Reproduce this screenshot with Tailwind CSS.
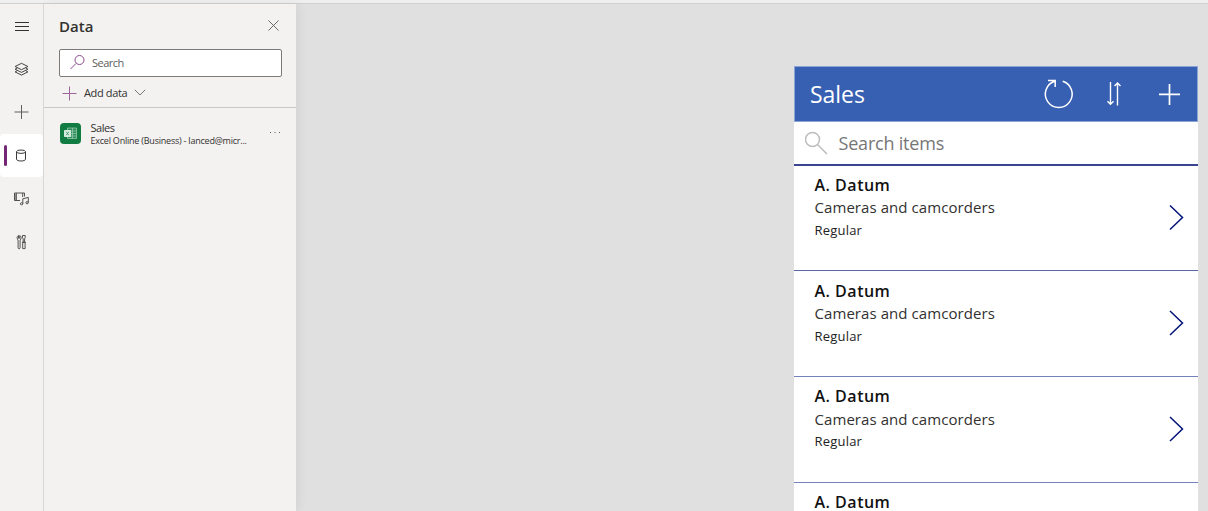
<!DOCTYPE html>
<html lang="en">
<head>
<meta charset="utf-8">
<title>Data</title>
<script src="https://cdn.jsdelivr.net/npm/@tailwindcss/browser@4"></script>
</head>
<body class="h-[511px] w-[1208px] overflow-hidden bg-[#e0e0e0] font-['Open_Sans','Noto_Sans',sans-serif] text-[#323130]">
<div class="flex h-[511px] flex-col overflow-hidden">
  <div class="h-1 shrink-0 border-b border-[#d0d0d0] bg-[#f0f0f0]"></div>
  <div class="flex min-h-0 flex-1">
    <nav class="z-20 flex w-11 shrink-0 flex-col border-r border-[#d8d7d6] bg-[#f3f2f1]">
      <button class="flex h-[43px] items-center pl-[13.500px]" aria-label="Menu">
        <svg class="h-4 w-4" viewBox="0 0 16 16" fill="none" stroke="#323130"><path d="M1 4.500h14M1 8.500h14M1 12.500h14"/></svg>
      </button>
      <button class="flex h-[43px] items-center pl-[13px]" aria-label="Tree view">
        <svg class="h-4 w-4" viewBox="0 0 16 16" fill="none" stroke="#3b3a39" stroke-width=".95"><path d="M8.500 2.300 14.900 5.500 8.500 8.700 2.100 5.500z"/><path d="M4.200 7 2.100 8.200l6.400 3.200 6.400-3.200L12.800 7M4.200 9.700l-2.100 1.200 6.400 3.200 6.400-3.200-2.100-1.200"/></svg>
      </button>
      <button class="flex h-[43px] items-center pl-[13px]" aria-label="Insert">
        <svg class="h-4 w-4" viewBox="0 0 16 16" fill="none" stroke="#605e5c"><path d="M1.500 8h14M8.500 1v14"/></svg>
      </button>
      <button class="mt-px flex h-[43px] items-center rounded-sm bg-white pl-1" aria-label="Data">
        <span class="h-[21px] w-[3px] rounded-sm bg-[#742774]"></span>
        <svg class="ml-1.5 h-4 w-4" viewBox="0 0 16 16" fill="none" stroke="#3b3a39"><path d="M3.500 3.700v7.600c0 1 2 1.700 4.500 1.700s4.500-.7 4.500-1.700V3.700"/><ellipse cx="8" cy="3.700" rx="4.500" ry="1.700"/></svg>
      </button>
      <button class="flex h-[43px] items-center pl-[13px]" aria-label="Media">
        <svg class="h-4 w-4" viewBox="0 0 16 16" fill="none" stroke="#4a4948" stroke-width=".95"><path d="M7 9.500H1.500V2h10v3.500M3.300 2v7.500M1.500 4h1.800M1.500 6h1.800M1.500 8h1.800M9.700 2v4"/><path d="M9.800 12.800V7.800l5.500-1.400v5.300"/><ellipse cx="8.600" cy="12.800" rx="1.200" ry="1.100"/><ellipse cx="14.100" cy="11.700" rx="1.200" ry="1.100"/></svg>
      </button>
      <button class="flex h-[43px] items-center pl-[13px]" aria-label="Advanced tools">
        <svg class="h-4 w-4" viewBox="0 0 16 16" fill="none" stroke="#4a4948" stroke-width=".95"><path d="M5.500 1.500v2.700h1.200V1.500c1 .5 1.400 1.400 1.400 2.400s-.4 1.600-1 2.100v7.700c0 .7-.4 1.100-1 1.100s-1-.4-1-1.100V6c-.6-.5-1-1.100-1-2.100s.4-1.900 1.400-2.400zM9.500 1.500h2.700v2.300l-.6 1v3.400h-1.400V4.800l-.7-1zM9 8.300h3.800M9.700 8.300v6.300h2.400V8.300"/></svg>
      </button>
    </nav>

    <aside class="z-10 w-[252px] shrink-0 bg-[#f3f2f1] shadow-[2px_0_10px_rgba(0,0,0,0.07)]">
      <div class="h-[104px] border-b border-[#c8c8c8] pr-3.5 pl-[15px]">
        <header class="flex h-[45px] items-center justify-between pb-0.5">
          <h1 class="text-[15px] leading-5 font-semibold">Data</h1>
          <svg class="mr-[3px] h-[11px] w-[11px]" viewBox="0 0 12 12" fill="none" stroke="#605e5c"><path d="m.5.5 11 11M11.500.5l-11 11"/></svg>
        </header>
        <div class="flex h-7 items-center rounded-[2px] border border-[#7b7a79] bg-white pl-2.5">
          <svg class="h-4 w-4" viewBox="0 0 16 16" fill="none" stroke="#8c4a8c"><circle cx="9.500" cy="5" r="4.500"/><path d="M6.200 8.300.5 14"/></svg>
          <span class="ml-1.5 text-[11px] tracking-[-0.5px] text-[#605e5c]">Search</span>
        </div>
        <div class="flex h-[31px] items-center pt-px pl-[3px]">
          <svg class="h-[15px] w-[15px]" viewBox="0 0 15 15" fill="none" stroke="#9b659b"><path d="M.5 7.500h14M7.500.5v14"/></svg>
          <span class="ml-[7px] text-[11px] tracking-[-0.35px]">Add data</span>
          <svg class="ml-[7px] h-3 w-3" viewBox="0 0 12 12" fill="none" stroke="#797775"><path d="m.8 2.800 5.200 5.200 5.200-5.200"/></svg>
        </div>
      </div>
      <div class="flex pt-[15px] pl-4">
        <svg class="h-[21px] w-[21px]" viewBox="0 0 21 21"><rect width="21" height="21" rx="4" fill="#107c41"/><path d="M7.500 5h9v10.500h-9zM7.500 8h9M7.500 10.500h9M7.500 13h9M12.500 5v10.500" fill="#2d8e59" stroke="#a4cfb7" stroke-width=".7"/><rect x="4" y="7" width="7" height="7" rx=".7" fill="#d5ebdf"/><path d="m6.200 8.800 2.600 3.400M8.800 8.800l-2.600 3.400" stroke="#3c9566" stroke-width=".9"/></svg>
        <div class="ml-[9.500px] w-[178.500px]">
          <p class="mt-[-2px] text-[11px] leading-[14px] tracking-[-0.45px]">Sales</p>
          <p class="text-[9px] leading-3 tracking-[-0.220px] whitespace-nowrap">Excel Online (Business) - lanced@micr...</p>
        </div>
        <svg class="mt-2 h-2 w-3" viewBox="0 0 12 8" fill="#605e5c"><path d="M1 1h1v1H1zM5.500 1h1v1h-1zM10 1h1v1h-1z"/></svg>
      </div>
    </aside>

    <main class="flex flex-1 justify-end overflow-hidden pt-[62px] pr-2.5">
      <section class="w-[404px] bg-white">
        <header class="flex h-14 items-center border border-[#8da4d6] bg-[#3860b2] pl-[15px] text-white">
          <h2 class="w-[233px] text-[23px] leading-8 tracking-[-0.05px]">Sales</h2>
          <svg class="h-8 w-8" viewBox="0 0 32 32" fill="none" stroke="white" stroke-width="1.500"><path d="M19.700 3.300A13.400 13.400 0 1 1 11.800 3.300M5 2.500h7.200v6.500"/></svg>
          <svg class="ml-[23px] h-8 w-8" viewBox="0 0 32 32" fill="none" stroke="white" stroke-width="1.400"><path d="M12.500 4v22M9.500 23.300l3 3 3-3M19.500 27.500V5M16.500 8l3-3 3 3"/></svg>
          <svg class="ml-[23px] h-8 w-8" viewBox="0 0 32 32" fill="none" stroke="white" stroke-width="1.700"><path d="M6 16.300h21M16.500 6v21"/></svg>
        </header>
        <div class="flex h-[44px] items-center border-b-2 border-[#3c4690] pl-[11px]">
          <svg class="h-6 w-6" viewBox="0 0 24 24" fill="none" stroke="#bdbdbd" stroke-width="1.500"><circle cx="7.500" cy="8.500" r="7"/><path d="m12.500 13.500 9.500 9.500"/></svg>
          <span class="ml-[9.500px] text-[18px] leading-6 tracking-[-0.2px] text-[#767676]">Search items</span>
        </div>
        <article class="flex h-[105px] items-center justify-between border-b border-[#5a68aa] pr-[14.500px] pl-[20.500px]">
          <div class="h-full pt-[7px]"><h3 class="text-[16px] leading-6 font-semibold tracking-[0.5px] text-[#111]">A. Datum</h3><p class="text-[15px] leading-5 tracking-[0.07px]">Cameras and camcorders</p><p class="text-[13px] leading-[27px] tracking-[0.2px] text-[#222]">Regular</p></div>
          <svg class="h-7 w-4" viewBox="0 0 16 28" fill="none" stroke="#001278" stroke-width="1.500"><path d="m2 1.500 12.500 12L2 25.500"/></svg>
        </article>
        <article class="flex h-[106px] items-center justify-between border-b border-[#7582ba] pr-[14.500px] pl-[20.500px]">
          <div class="h-full pt-2"><h3 class="text-[16px] leading-6 font-semibold tracking-[0.5px] text-[#111]">A. Datum</h3><p class="text-[15px] leading-5 tracking-[0.07px]">Cameras and camcorders</p><p class="text-[13px] leading-[27px] tracking-[0.2px] text-[#222]">Regular</p></div>
          <svg class="h-7 w-4" viewBox="0 0 16 28" fill="none" stroke="#001278" stroke-width="1.500"><path d="m2 1 12.500 12L2 25"/></svg>
        </article>
        <article class="flex h-[106px] items-center justify-between border-b border-[#7582ba] pr-[14.500px] pl-[20.500px]">
          <div class="h-full pt-[7px]"><h3 class="text-[16px] leading-6 font-semibold tracking-[0.5px] text-[#111]">A. Datum</h3><p class="text-[15px] leading-[22px] tracking-[0.07px]">Cameras and camcorders</p><p class="text-[13px] leading-[23px] tracking-[0.2px] text-[#222]">Regular</p></div>
          <svg class="h-7 w-4" viewBox="0 0 16 28" fill="none" stroke="#001278" stroke-width="1.500"><path d="m2 1 12.500 12L2 25"/></svg>
        </article>
        <article class="h-[106px] pt-[7px] pl-[20.500px]"><h3 class="text-[16px] leading-6 font-semibold tracking-[0.5px] text-[#111]">A. Datum</h3></article>
      </section>
    </main>
  </div>
</div>
</body>
</html>
